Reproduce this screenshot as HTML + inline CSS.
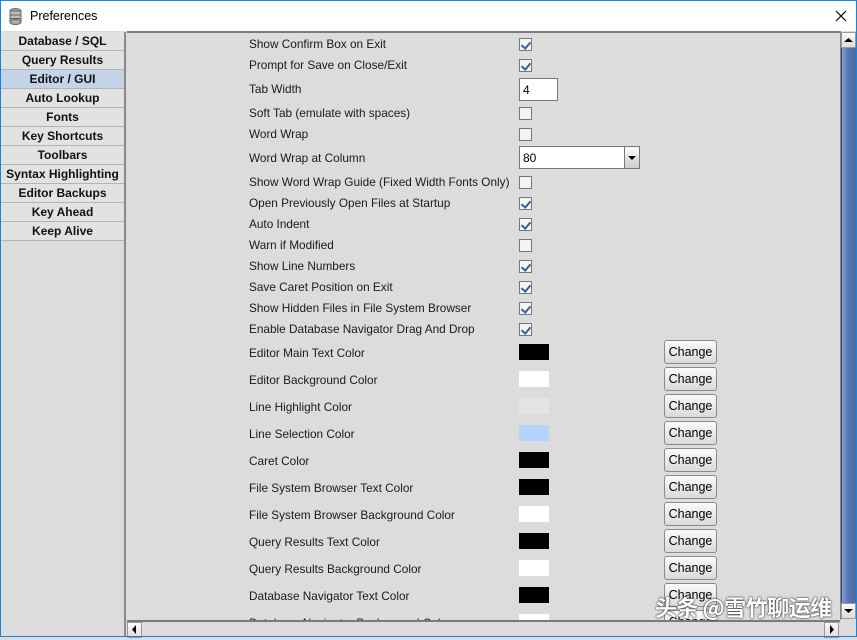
<!DOCTYPE html><html><head><meta charset="utf-8"><style>
*{margin:0;padding:0;box-sizing:border-box}
body{width:857px;height:637px;overflow:hidden;background:#dcdcdc;font-family:"Liberation Sans",sans-serif;font-size:12px;color:#000;position:relative}
.win{position:absolute;inset:0;border:1px solid #1883d7;border-top:none;pointer-events:none}
.title{position:absolute;left:0;top:0;width:857px;height:31px;background:#fff;border-top:1px solid #1883d7}
.title span{position:absolute;left:30px;top:8px;font-size:12.5px}
.nav{position:absolute;left:1px;top:32px;width:125px;height:605px;background:#dcdcdc;border-right:2px solid #8a8a8a}
.nav div{height:19px;border-bottom:1px solid #b4b4b4;text-align:center;font-weight:bold;font-size:12px;line-height:19px;color:#111;background:#e2e2e2}
.nav div.sel{background:#c3d3e8}
.content{position:absolute;left:127px;top:31px;width:713px;height:589px;border-top:2px solid #7a7a7a;overflow:hidden}
.l{position:absolute;left:122px;font-size:11.8px;color:#1a1a1a}
.cb{position:absolute;left:392px;width:13px;height:13px;border:1px solid #777;background:#f4f4f4}
.cb.c::after{content:"";position:absolute;left:3px;top:1px;width:4px;height:7px;border:solid #3b5a9a;border-width:0 2px 2px 0;transform:rotate(40deg)}
.sw{position:absolute;left:392px;width:30px;height:16px}
.btn{position:absolute;left:537px;width:53px;height:24px;border:1px solid #8a8a8a;border-radius:3px;background:linear-gradient(#fafafa,#dadada);text-align:center;line-height:22px;font-size:12.5px}
.vs{position:absolute;left:840px;top:31px;width:16px;height:589px;background:#dcdcdc;border-left:1px solid #888}
.thumb{position:absolute;left:0;top:17px;width:16px;height:555px;background:linear-gradient(90deg,#8aa0cf,#5676b0 40%,#4a66a0);border-left:1px solid #2a4a8a}
.ab{position:absolute;width:15px;height:16px;background:linear-gradient(#fafafa,#ddd);border:1px solid #999}
.hs{position:absolute;left:127px;top:620px;width:713px;height:16px;border-top:2px solid #7a7a7a;background:#dcdcdc}
</style></head><body>
<div class="title"><svg style="position:absolute;left:9px;top:7px" width="13" height="17"><ellipse cx="6.5" cy="3" rx="5.5" ry="2.5" fill="#aaa" stroke="#666"/><rect x="1" y="3" width="11" height="11" fill="#bbb" stroke="#666"/><ellipse cx="6.5" cy="14" rx="5.5" ry="2.5" fill="#aaa" stroke="#666"/><line x1="1" y1="7" x2="12" y2="7" stroke="#666"/><line x1="1" y1="10.5" x2="12" y2="10.5" stroke="#666"/></svg><span>Preferences</span>
<svg style="position:absolute;left:835px;top:9px" width="12" height="12"><path d="M1 1L11 11M11 1L1 11" stroke="#000" stroke-width="1.2"/></svg></div>
<div class="nav">
<div>Database / SQL</div><div>Query Results</div><div class="sel">Editor / GUI</div><div>Auto Lookup</div><div>Fonts</div><div>Key Shortcuts</div><div>Toolbars</div><div>Syntax Highlighting</div><div>Editor Backups</div><div>Key Ahead</div><div>Keep Alive</div>
</div>
<div class="content">
<div class="l" style="top:4px">Show Confirm Box on Exit</div><div class="cb c" style="top:5px"></div>
<div class="l" style="top:25px">Prompt for Save on Close/Exit</div><div class="cb c" style="top:26px"></div>
<div class="l" style="top:49px">Tab Width</div><div style="position:absolute;left:392px;top:45px;width:39px;height:23px;background:#fff;border:1px solid #777;padding:4px 3px">4</div>
<div class="l" style="top:73px">Soft Tab (emulate with spaces)</div><div class="cb" style="top:74px"></div>
<div class="l" style="top:94px">Word Wrap</div><div class="cb" style="top:95px"></div>
<div class="l" style="top:118px">Word Wrap at Column</div><div style="position:absolute;left:392px;top:113px;width:121px;height:23px;background:#fff;border:1px solid #777;padding:4px 3px">80<div style="position:absolute;right:-1px;top:-1px;width:16px;height:23px;border:1px solid #777;background:linear-gradient(#fafafa,#ccc)"><svg width="14" height="21"><path d="M3 9h8l-4 4z" fill="#000"/></svg></div></div>
<div class="l" style="top:142px">Show Word Wrap Guide (Fixed Width Fonts Only)</div><div class="cb" style="top:143px"></div>
<div class="l" style="top:163px">Open Previously Open Files at Startup</div><div class="cb c" style="top:164px"></div>
<div class="l" style="top:184px">Auto Indent</div><div class="cb c" style="top:185px"></div>
<div class="l" style="top:205px">Warn if Modified</div><div class="cb" style="top:206px"></div>
<div class="l" style="top:226px">Show Line Numbers</div><div class="cb c" style="top:227px"></div>
<div class="l" style="top:247px">Save Caret Position on Exit</div><div class="cb c" style="top:248px"></div>
<div class="l" style="top:268px">Show Hidden Files in File System Browser</div><div class="cb c" style="top:269px"></div>
<div class="l" style="top:289px">Enable Database Navigator Drag And Drop</div><div class="cb c" style="top:290px"></div>

<div class="l" style="top:313px">Editor Main Text Color</div><div class="sw" style="top:311px;background:#000"></div><div class="btn" style="top:307px">Change</div>
<div class="l" style="top:340px">Editor Background Color</div><div class="sw" style="top:338px;background:#fff"></div><div class="btn" style="top:334px">Change</div>
<div class="l" style="top:367px">Line Highlight Color</div><div class="sw" style="top:365px;background:#e4e4e4"></div><div class="btn" style="top:361px">Change</div>
<div class="l" style="top:394px">Line Selection Color</div><div class="sw" style="top:392px;background:#b3d4fc"></div><div class="btn" style="top:388px">Change</div>
<div class="l" style="top:421px">Caret Color</div><div class="sw" style="top:419px;background:#000"></div><div class="btn" style="top:415px">Change</div>
<div class="l" style="top:448px">File System Browser Text Color</div><div class="sw" style="top:446px;background:#000"></div><div class="btn" style="top:442px">Change</div>
<div class="l" style="top:475px">File System Browser Background Color</div><div class="sw" style="top:473px;background:#fff"></div><div class="btn" style="top:469px">Change</div>
<div class="l" style="top:502px">Query Results Text Color</div><div class="sw" style="top:500px;background:#000"></div><div class="btn" style="top:496px">Change</div>
<div class="l" style="top:529px">Query Results Background Color</div><div class="sw" style="top:527px;background:#fff"></div><div class="btn" style="top:523px">Change</div>
<div class="l" style="top:556px">Database Navigator Text Color</div><div class="sw" style="top:554px;background:#000"></div><div class="btn" style="top:550px">Change</div>
<div class="l" style="top:583px">Database Navigator Background Color</div><div class="sw" style="top:581px;background:#fff"></div><div class="btn" style="top:577px">Change</div>
</div>
<div class="vs"><div class="ab" style="left:0;top:1px"><svg width="13" height="14"><path d="M2 9h9l-4.5-4z" fill="#000"/></svg></div><div class="thumb"></div><div class="ab" style="left:0;top:572px"><svg width="13" height="14"><path d="M2 5h9l-4.5 4z" fill="#000"/></svg></div></div>
<div class="hs"><div class="ab" style="left:0;top:0"><svg width="13" height="14"><path d="M8 2v9l-4-4.5z" fill="#000"/></svg></div><div class="ab" style="left:697px;top:0"><svg width="13" height="14"><path d="M5 2v9l4-4.5z" fill="#000"/></svg></div></div>
<div style="position:absolute;left:655px;top:591px;font-family:'Noto Sans CJK SC',sans-serif;font-size:22px;font-weight:bold;color:#fff;text-shadow:0 0 2px #333,0 0 1px #000;letter-spacing:-0.5px">头条 @雪竹聊运维</div>
<div class="win"></div>
</body></html>
